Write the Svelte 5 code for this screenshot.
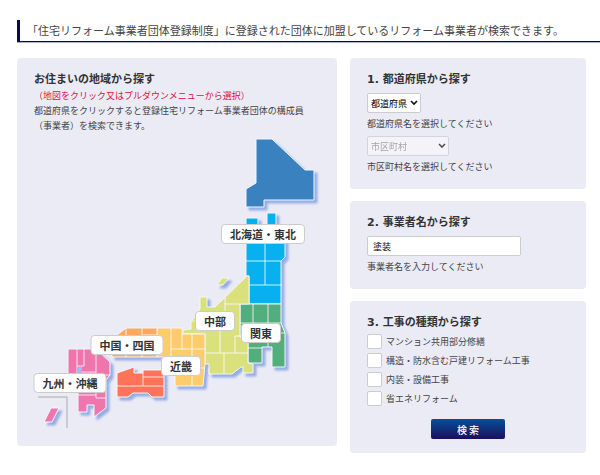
<script lang="ts">
    type Region = {
        id: string;
        color: string;
        shapes: string[];
        borders: string;
    };

    type AreaLabel = { name: string; x: number; y: number };

    // Map coordinates; the view box below uses the same origin
    const view = { x: 34, y: 133, width: 286, height: 301 };

    const regions: Region[] = [
        {
            id: 'hokkaido',
            color: '#3a81c0',
            shapes: ['256,139 272,139 305,170 314,170 314,200 264,200 264,207 246,207 246,189 256,183'],
            borders: ''
        },
        {
            id: 'tohoku',
            color: '#07b0ee',
            shapes: ['246,218 258,218 258,226 267,226 267,213 276,213 276,226 285,232 285,257 281,261 281,304 249,304 249,276 246,276'],
            borders: 'M265 226V285M246 261H282M249 285H282'
        },
        {
            id: 'kanto',
            color: '#52ae7c',
            shapes: ['240,304 281,304 281,323 285,333 285,367 272,367 272,347 262,347 262,363 248,363 248,337 240,337'],
            borders: 'M253 304V330M268 304V347M262 333H285M248 348H262M240 323H281'
        },
        {
            id: 'chubu',
            color: '#d9e07c',
            shapes: [
                '200,297 207,297 207,307 215,307 247,276 249,276 249,304 240,304 240,337 248,337 248,363 253,364 253,373 243,373 243,367 241,367 232,374 209,374 209,364 205,364 205,334 183,334 183,330 191,329 191,321 195,317 200,309',
                '217,285 222,278 229,278 223,285'
            ],
            borders: 'M225 298V320M225 304H240M220 326V353M205 353H248M224 353V374M235 353V336H248M192 321H200'
        },
        {
            id: 'kinki',
            color: '#ffcc6c',
            shapes: ['157,328 182,328 182,334 205,334 205,364 203,386 175,386 175,357 157,357'],
            borders: 'M171 328V357M182 334V350M171 349H205M192 334V386M175 368H204'
        },
        {
            id: 'chugoku',
            color: '#ffa85f',
            shapes: ['112,339 126,328 157,328 157,357 112,357'],
            borders: 'M126 328V357M142 328V357M142 335H157'
        },
        {
            id: 'shikoku',
            color: '#ff7359',
            shapes: ['117,373 134,367 134,373 143,373 143,370 164,370 164,397 152,397 148,393 133,393 128,397 117,397'],
            borders: 'M117 386H164M143 373V386M143 377H164'
        },
        {
            id: 'kyushu',
            color: '#ef76ad',
            shapes: [
                '68,349 96,349 110,362 110,375 106,380 106,408 94,417 94,405 87,405 87,412 78,412 78,380 68,374 68,349',
                '44,422 51,408 59,408 52,422'
            ],
            borders: 'M77 349V373M84 349V366H77M96 349V398M82 372H96M96 375H110M78 395H96M96 398H106'
        }
    ];

    const labels: AreaLabel[] = [
        { name: '北海道・東北', x: 263, y: 234 },
        { name: '中部', x: 215, y: 321 },
        { name: '関東', x: 261, y: 333 },
        { name: '中国・四国', x: 127, y: 345 },
        { name: '近畿', x: 181, y: 366 },
        { name: '九州・沖縄', x: 70, y: 383 }
    ];

    const workTypes = [
        'マンション共用部分修繕',
        '構造・防水含む戸建リフォーム工事',
        '内装・設備工事',
        '省エネリフォーム'
    ];

    let company = $state('塗装');
    let selected: string[] = $state([]);

    function place(label: AreaLabel) {
        const left = ((label.x - view.x) / view.width) * 100;
        const top = ((label.y - view.y) / view.height) * 100;
        return `left: ${left}%; top: ${top}%`;
    }
</script>

<main>
    <h1>「住宅リフォーム事業者団体登録制度」に登録された団体に加盟しているリフォーム事業者が検索できます。</h1>

    <div class="columns">
        <section class="panel area">
            <h2>お住まいの地域から探す</h2>
            <p class="notice">（地図をクリック又はプルダウンメニューから選択）</p>
            <p>都道府県をクリックすると登録住宅リフォーム事業者団体の構成員（事業者）を検索できます。</p>

            <div class="map">
                <svg viewBox="{view.x} {view.y} {view.width} {view.height}" aria-hidden="true">
                    <g class="land">
                        {#each regions as region (region.id)}
                            {#each region.shapes as points}
                                <polygon {points} fill={region.color} />
                            {/each}
                        {/each}
                    </g>
                    {#each regions as region (region.id)}
                        <path class="border" d={region.borders} />
                    {/each}
                    <rect class="bay" x="77" y="367" width="5" height="6" />
                    <path class="inset" d="M38 397H67V428" />
                </svg>
                {#each labels as label}
                    <button type="button" class="label" style={place(label)}>{label.name}</button>
                {/each}
            </div>
        </section>

        <form class="search" onsubmit={(e) => e.preventDefault()}>
            <section class="panel">
                <h2>1. 都道府県から探す</h2>
                <div class="field">
                    <select id="prefecture">
                        <option>都道府県</option>
                    </select>
                    <label for="prefecture">都道府県名を選択してください</label>
                </div>
                <div class="field next">
                    <select id="city" class="city" disabled>
                        <option>市区町村</option>
                    </select>
                    <label for="city">市区町村名を選択してください</label>
                </div>
            </section>

            <section class="panel">
                <h2>2. 事業者名から探す</h2>
                <div class="field">
                    <input id="company" type="text" bind:value={company} />
                    <label for="company">事業者名を入力してください</label>
                </div>
            </section>

            <section class="panel works">
                <h2>3. 工事の種類から探す</h2>
                <ul>
                    {#each workTypes as work}
                        <li>
                            <label>
                                <input type="checkbox" value={work} bind:group={selected} />
                                {work}
                            </label>
                        </li>
                    {/each}
                </ul>
                <button type="submit" class="submit">検 索</button>
            </section>
        </form>
    </div>
</main>

<style>
    :global(body) {
        margin: 0;
        background: #fff;
    }

    main {
        padding: 20px 0 20px 17px;
        color: #444;
        font-family: "Noto Sans CJK JP", sans-serif;
        font-size: 9px;
        line-height: 15px;
    }

    h1,
    h2,
    p,
    ul {
        margin: 0;
        padding: 0;
    }

    h1 {
        padding-left: 7px;
        border-left: 3px solid #0a0a50;
        border-bottom: 1px solid #0a0a50;
        box-shadow: 0 1px #aab0d4;
        font-size: 11px;
        font-weight: 400;
        line-height: 21px;
        white-space: nowrap;
    }

    .columns {
        display: grid;
        grid-template-columns: 320fr 236fr;
        align-items: start;
        gap: 13px;
        margin: 16px 14px 0 0;
    }

    .panel {
        padding: 13px 17px 12px;
        border-radius: 4px;
        background: #ebebf6;
    }

    h2 {
        color: #333;
        font-family: "DejaVu Sans", "Noto Sans CJK JP", sans-serif;
        font-size: 11px;
        font-weight: 700;
        line-height: 17px;
    }

    .notice {
        color: #e0103c;
    }

    .map {
        position: relative;
    }

    .map svg {
        display: block;
        width: 100%;
        overflow: visible;
    }

    .land {
        filter: drop-shadow(3px 3px 1px #94aee4);
    }

    .land polygon {
        stroke: #f4f6fa;
        stroke-width: 1;
    }

    .border {
        fill: none;
        stroke: #fff;
        stroke-opacity: 0.8;
    }

    .bay {
        fill: #a5b9e6;
    }

    .inset {
        fill: none;
        stroke: #aaa;
    }

    .label {
        position: absolute;
        transform: translate(-50%, -50%);
        padding: 0 8px;
        border: 1px solid #ccc;
        border-radius: 4px;
        background: #fff;
        color: #333;
        font-family: inherit;
        font-size: 11px;
        font-weight: 700;
        line-height: 18px;
        white-space: nowrap;
        cursor: pointer;
    }

    .search {
        display: grid;
        gap: 12px;
    }

    .field {
        display: flex;
        flex-direction: column;
        align-items: flex-start;
        margin-top: 5px;
    }

    .field.next {
        margin-top: 2px;
    }

    .field label {
        line-height: 21px;
    }

    select,
    .field input {
        box-sizing: border-box;
        height: 20px;
        border: 1px solid #ccc;
        border-radius: 2px;
        background: #fff;
        color: #000;
        font-family: inherit;
        font-size: 9px;
    }

    select {
        appearance: none;
        width: 54px;
        padding: 0 12px 0 3px;
        background: #fff url("data:image/svg+xml,%3Csvg xmlns='http://www.w3.org/2000/svg' width='8' height='6'%3E%3Cpath d='M1 1l3 3 3-3' fill='none' stroke='%23111' stroke-width='1.6'/%3E%3C/svg%3E") no-repeat right 2px center;
    }

    .city {
        width: 82px;
    }

    select:disabled {
        background-color: #f7f7fb;
        color: #888;
        opacity: 0.7;
    }

    .field input {
        width: 154px;
        max-width: 100%;
        padding: 0 5px;
    }

    .works {
        padding-bottom: 14px;
    }

    ul {
        margin-top: 1px;
        list-style: none;
    }

    li label {
        display: flex;
        align-items: center;
        gap: 4px;
        line-height: 19px;
    }

    li input {
        appearance: none;
        box-sizing: border-box;
        width: 15px;
        height: 15px;
        margin: 0;
        border: 1px solid #ccc;
        border-radius: 2px;
        background: #fff;
    }

    li input:checked {
        background: #0a4a8c;
    }

    .submit {
        display: block;
        width: 74px;
        height: 20px;
        margin: 11px auto 0;
        padding: 0;
        border: 0;
        border-radius: 2px;
        background: linear-gradient(#05509a, #1b0f5c);
        color: #fff;
        font-family: inherit;
        font-size: 10px;
        font-weight: 500;
        cursor: pointer;
    }
</style>
